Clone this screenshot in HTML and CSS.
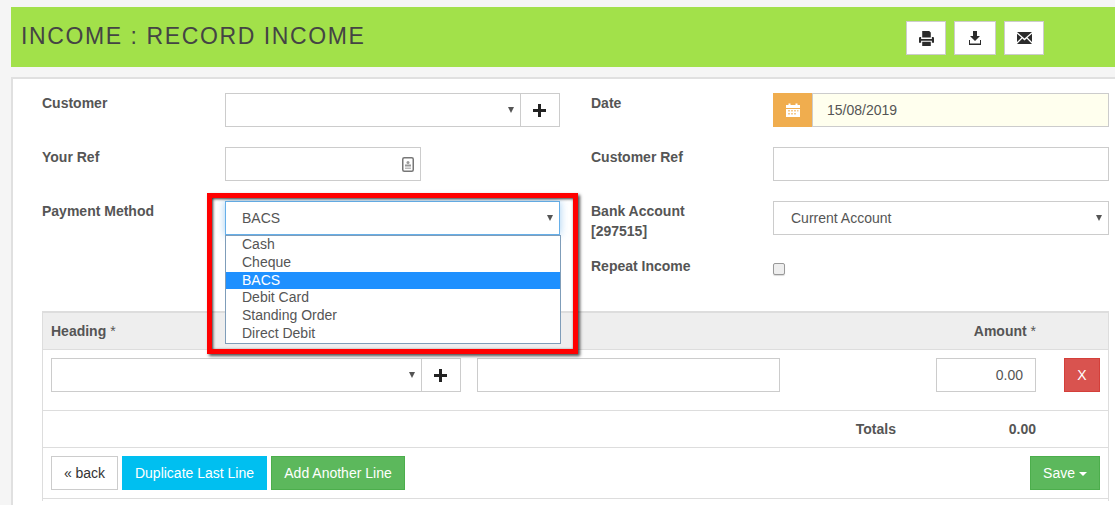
FILE: index.html
```html
<!DOCTYPE html>
<html lang="en">
<head>
<meta charset="utf-8">
<title>Income : Record Income</title>
<link rel="stylesheet" href="styles.css">
</head>
<body>
<header class="topbar">
  <h1 class="title">INCOME : RECORD INCOME</h1>
  <div class="tools">
    <button class="tool tool-a" type="button" aria-label="Print">
      <svg width="15" height="15" viewBox="0 0 14 14"><path fill="#2b2b2b" d="M3 0h6.500L11 1.500V6H3zM0 6.500a1 1 0 0 1 1-1h1V7.500h10V5.500h1a1 1 0 0 1 1 1V11h-2V9H2v2H0zM3 10h8v4H3z"/></svg>
    </button>
    <button class="tool tool-b" type="button" aria-label="Download">
      <svg width="14" height="14" viewBox="0 0 14 14"><path fill="#2b2b2b" d="M5 0h4v5h3L7 10 2 5h3zM1 9h1v3.500h10V9h1v5H1z"/></svg>
    </button>
    <button class="tool tool-c" type="button" aria-label="Email">
      <svg width="15" height="12" viewBox="0 0 15 12"><path fill="#2b2b2b" d="M0 0h15L7.500 6.500zM0 1.800 4.500 5.600 0 10zM15 1.800 10.500 5.600 15 10zM0 12l5.300-5.500 2.200 1.900 2.200-1.900L15 12z"/></svg>
    </button>
  </div>
</header>

<main class="panel">
  <form class="form">
    <div class="col">
      <div class="row">
        <label class="lab">Customer</label>
        <div class="group w335">
          <div class="sel grow"><i class="caret"></i></div>
          <button class="addon" type="button" aria-label="Add"><svg width="13" height="13" viewBox="0 0 13 13"><path fill="#222" d="M5 0h3v5h5v3H8v5H5V8H0V5h5z"/></svg></button>
        </div>
      </div>
      <div class="row">
        <label class="lab">Your Ref</label>
        <div class="box w196 refbox">
          <svg class="cardicon" width="12" height="15" viewBox="0 0 12 15"><rect x=".75" y=".75" width="10.500" height="13.500" rx="1.500" fill="#fff" stroke="#777" stroke-width="1.500"/><circle cx="6" cy="5.500" r="1.500" fill="#999"/><rect x="3" y="7.500" width="6" height="2" fill="#999"/><rect x="3" y="10.500" width="6" height="1.500" fill="#bbb"/></svg>
        </div>
      </div>
      <div class="row">
        <label class="lab">Payment Method</label>
        <div class="sel w335 focus"><span class="val">BACS</span><i class="caret"></i></div>
      </div>
    </div>
    <div class="col col2">
      <div class="row">
        <label class="lab lab2">Date</label>
        <div class="group w336">
          <div class="cal">
            <svg width="14" height="14" viewBox="0 0 14 14"><path fill="#fff" d="M0 2h2.500V.5h2V2h5V.5h2V2H14v3H0zM0 6h14v8H0z"/><g fill="#f5c98c"><rect x="2" y="7" width="2" height="1.500"/><rect x="5" y="7" width="2" height="1.500"/><rect x="8" y="7" width="2" height="1.500"/><rect x="11" y="7" width="1.500" height="1.500"/><rect x="2" y="10" width="2" height="1.500"/><rect x="5" y="10" width="2" height="1.500"/><rect x="8" y="10" width="2" height="1.500"/></g></svg>
          </div>
          <div class="box grow dateval">15/08/2019</div>
        </div>
      </div>
      <div class="row">
        <label class="lab lab2">Customer Ref</label>
        <div class="box w336"></div>
      </div>
      <div class="row rowbank">
        <label class="lab lab2">Bank Account<br>[297515]</label>
        <div class="sel selacct w336"><span class="val">Current Account</span><i class="caret"></i></div>
      </div>
      <div class="row rowrepeat">
        <label class="lab lab2">Repeat Income</label>
        <span class="check"></span>
      </div>
    </div>
  </form>

  <section class="lines">
    <div class="lhead"><span class="hcol">Heading <span class="star">*</span></span><span class="hamt">Amount <span class="star">*</span></span></div>
    <div class="lrow">
      <div class="group w410">
        <div class="sel grow"><i class="caret"></i></div>
        <button class="addon" type="button" aria-label="Add"><svg width="13" height="13" viewBox="0 0 13 13"><path fill="#222" d="M5 0h3v5h5v3H8v5H5V8H0V5h5z"/></svg></button>
      </div>
      <div class="box wdesc"></div>
      <div class="box wamt">0.00</div>
      <button class="btn red" type="button">X</button>
    </div>
    <div class="ltotal"><span class="tlabel">Totals</span><span class="tval">0.00</span></div>
    <div class="lactions">
      <button class="btn white" type="button">« back</button>
      <button class="btn cyan" type="button">Duplicate Last Line</button>
      <button class="btn green" type="button">Add Another Line</button>
      <button class="btn green save" type="button">Save <i class="down"></i></button>
    </div>
    <div class="lfoot"></div>
  </section>
</main>

<div class="annot"></div>
<ul class="drop">
  <li>Cash</li>
  <li>Cheque</li>
  <li class="on">BACS</li>
  <li>Debit Card</li>
  <li>Standing Order</li>
  <li>Direct Debit</li>
</ul>
</body>
</html>
```

FILE: styles.css
```css
* { box-sizing: border-box; }
html, body { margin: 0; height: 100%; overflow: hidden; }
body {
  padding: 7px 0 0 11px;
  background: #f5f5f5;
  font-family: "Liberation Sans", Arial, sans-serif;
  font-size: 14px;
  color: #555;
  position: relative;
}
.topbar {
  height: 60px;
  background: #a2e14a;
  display: flex;
  align-items: flex-start;
  justify-content: space-between;
}
.title {
  margin: 15px 0 0 10px;
  font-size: 23px;
  line-height: 28px;
  font-weight: 400;
  letter-spacing: 1.6px;
  color: #444;
}
.tools { display: flex; gap: 8px; margin: 14px 71px 0 0; }
.tool {
  height: 34px;
  background: #fff;
  border: 1px solid #ccc;
  padding: 0;
  display: flex;
  align-items: center;
  justify-content: center;
}
.tool-a { width: 40px; }
.tool-b { width: 42px; }
.tool-c { width: 40px; }

.panel {
  margin-top: 10px;
  height: 440px;
  background: #fff;
  border-top: 2px solid #e0e0e0;
  border-left: 2px solid #e0e0e0;
  padding: 14px 6px 0 29px;
}
.form { display: flex; height: 218px; }
.col { width: 549px; }
.col2 { width: 518px; }
.row { display: flex; height: 34px; margin-bottom: 20px; }
.lab { width: 183px; font-weight: 700; color: #555; line-height: 20px; padding-top: 0; }
.lab2 { width: 182px; }
.group { display: flex; height: 34px; }
.grow { flex: 1; min-width: 0; }
.w335 { width: 335px; }
.w336 { width: 336px; }
.w196 { width: 196px; }
.w410 { width: 410px; }
.box {
  height: 34px;
  border: 1px solid #ccc;
  background: #fff;
  line-height: 32px;
}
.sel {
  height: 34px;
  border: 1px solid #ccc;
  background: #fff;
  position: relative;
  line-height: 32px;
  padding-left: 16px;
}
.selacct { padding-left: 17px; }
.focus {
  border-color: #66afe9;
  box-shadow: 0 0 8px rgba(102, 175, 233, .6);
}
.caret {
  position: absolute;
  right: 6px;
  top: 13px;
  width: 0;
  height: 0;
  border-left: 3px solid transparent;
  border-right: 3px solid transparent;
  border-top: 6px solid #555;
}
.addon {
  width: 39px;
  height: 34px;
  padding: 0 2px 0 0;
  border: 1px solid #ccc;
  border-left: 0;
  background: #fff;
  display: flex;
  align-items: center;
  justify-content: center;
}
.refbox { display: flex; align-items: center; justify-content: flex-end; padding-right: 6px; }
.cal {
  width: 39px;
  height: 34px;
  background: #f0ad4e;
  display: flex;
  align-items: center;
  justify-content: center;
}
.dateval { background: #ffffee; padding-left: 14px; border-left-width: 1px; }
.rowbank { margin-bottom: 21px; }
.rowrepeat { height: 20px; margin: 0; }
.check {
  width: 12px;
  height: 12px;
  margin-top: 7px;
  border: 1px solid #999;
  border-radius: 2px;
  background: #eee;
  box-shadow: 0 1px 1px rgba(0, 0, 0, .15);
}

.lines {
  width: 1067px;
  height: 190px;
  margin-top: 0;
  border-left: 1px solid #ddd;
  border-right: 1px solid #ddd;
}
.lhead {
  height: 39px;
  background: #eee;
  border-top: 2px solid #ddd;
  border-bottom: 1px solid #ddd;
  display: flex;
  justify-content: space-between;
  font-weight: 700;
  line-height: 36px;
  padding: 0 72px 0 8px;
}
.star { font-weight: 400; }
.lrow {
  height: 61px;
  border-bottom: 1px solid #ddd;
  display: flex;
  align-items: flex-start;
  padding: 8px 8px 0 8px;
}
.wdesc { width: 303px; margin-left: 16px; }
.wamt { width: 100px; margin-left: 156px; text-align: right; padding-right: 12px; }
.btn {
  height: 34px;
  border: 1px solid;
  padding: 0 12px;
  font: inherit;
  color: #fff;
}
.red { width: 36px; margin-left: 28px; padding: 0; background: #d9534f; border-color: #d43f3a; }
.ltotal {
  height: 37px;
  border-bottom: 1px solid #ddd;
  display: flex;
  justify-content: flex-end;
  font-weight: 700;
  line-height: 36px;
  padding-right: 72px;
}
.tval { width: 140px; text-align: right; }
.lactions {
  height: 51px;
  border-bottom: 1px solid #ddd;
  display: flex;
  gap: 4px;
  padding: 8px 8px 0;
}
.white { width: 67px; padding: 0; background: #fff; border-color: #ccc; color: #333; }
.cyan { width: 145px; padding: 0; background: #00bff0; border-color: #00bff0; }
.green { width: 134px; padding: 0; background: #5cb85c; border-color: #4cae4c; }
.save { width: 70px; margin-left: auto; }
.down {
  display: inline-block;
  vertical-align: middle;
  width: 0;
  height: 0;
  border-left: 4px solid transparent;
  border-right: 4px solid transparent;
  border-top: 4px solid #fff;
}
.annot {
  position: absolute;
  left: 207px;
  top: 193px;
  width: 371px;
  height: 161px;
  border: 5px solid #f00;
  box-shadow: 2px 2px 3px rgba(0, 0, 0, .7), inset 1px 1px 3px rgba(0, 0, 0, .8);
}
.drop {
  position: absolute;
  left: 225px;
  top: 235px;
  width: 336px;
  height: 109px;
  margin: 0;
  padding: 0;
  list-style: none;
  background: #fff;
  border: 1px solid #7f9db9;
  line-height: 17.800px;
}
.drop li { padding-left: 16px; height: 17.800px; }
.drop .on { background: #1e90ff; color: #fff; }
```
